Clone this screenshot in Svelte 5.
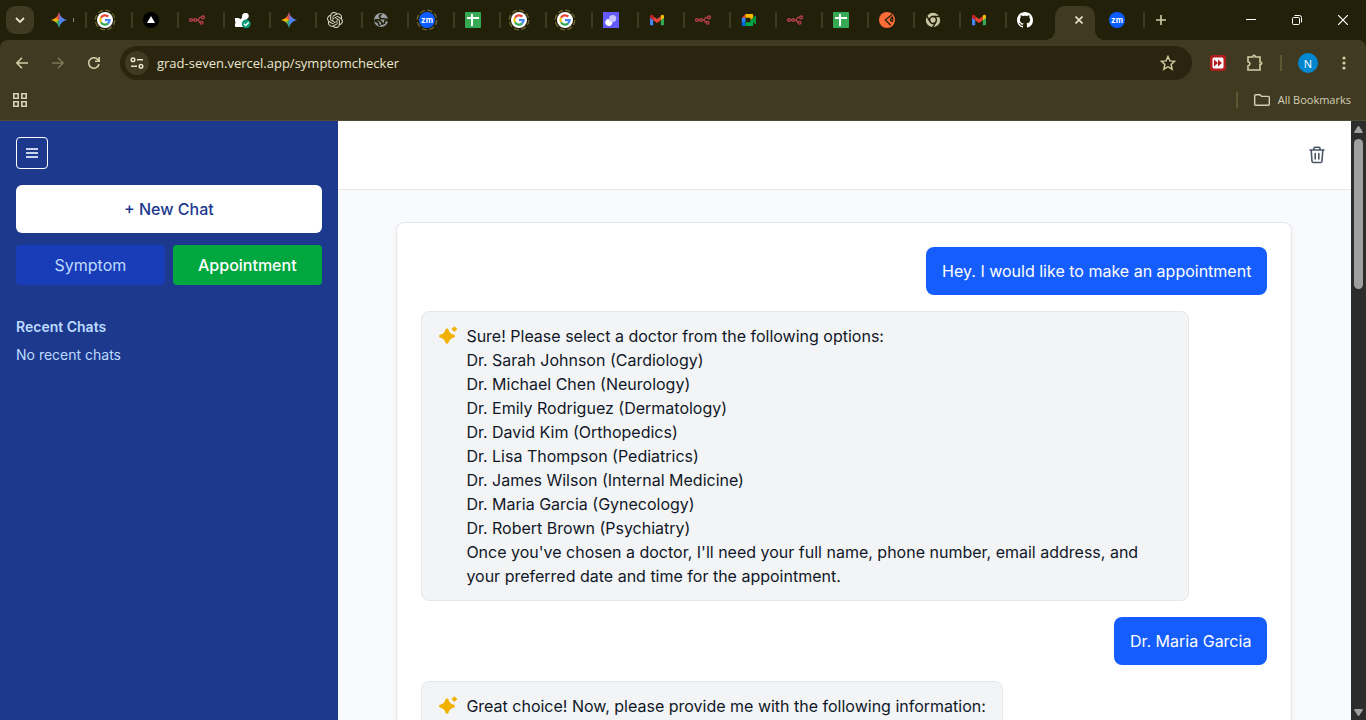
<script>
  const tabs = [
    { icon: 'gemini', label: 'Gemini', sliver: true },
    { icon: 'google', label: 'Google', ring: true },
    { icon: 'vercel', label: 'Vercel' },
    { icon: 'n8n', label: 'n8n' },
    { icon: 'checked', label: 'Webhook' },
    { icon: 'gemini', label: 'Gemini' },
    { icon: 'openai', label: 'ChatGPT' },
    { icon: 'globe', label: 'Web page' },
    { icon: 'zoom', label: 'Zoom', ring: true },
    { icon: 'sheets', label: 'Sheets' },
    { icon: 'google', label: 'Google', ring: true },
    { icon: 'google', label: 'Google', ring: true },
    { icon: 'shapes', label: 'Workspace' },
    { icon: 'gmail', label: 'Gmail' },
    { icon: 'n8n', label: 'n8n' },
    { icon: 'meet', label: 'Meet' },
    { icon: 'n8n', label: 'n8n' },
    { icon: 'sheets', label: 'Sheets' },
    { icon: 'orange', label: 'Docs' },
    { icon: 'chrome', label: 'Chrome' },
    { icon: 'gmail', label: 'Gmail' },
    { icon: 'github', label: 'GitHub', last: true },
    { icon: 'active', label: 'Symptom checker' },
    { icon: 'zoom', label: 'Zoom' }
  ];

  const messages = [
    { from: 'user', lines: ['Hey. I would like to make an appointment'] },
    {
      from: 'assistant',
      lines: [
        'Sure! Please select a doctor from the following options:',
        'Dr. Sarah Johnson (Cardiology)',
        'Dr. Michael Chen (Neurology)',
        'Dr. Emily Rodriguez (Dermatology)',
        'Dr. David Kim (Orthopedics)',
        'Dr. Lisa Thompson (Pediatrics)',
        'Dr. James Wilson (Internal Medicine)',
        'Dr. Maria Garcia (Gynecology)',
        'Dr. Robert Brown (Psychiatry)',
        "Once you've chosen a doctor, I'll need your full name, phone number, email address, and your preferred date and time for the appointment."
      ]
    },
    { from: 'user', lines: ['Dr. Maria Garcia'] },
    {
      from: 'assistant',
      lines: ['Great choice! Now, please provide me with the following information:']
    }
  ];

  let address = $state('grad-seven.vercel.app/symptomchecker');
</script>

{#snippet favicon(name)}
  {#if name === 'gemini'}
    <span class="gemini"></span>
  {:else if name === 'google'}
    <svg width="16" height="16" viewBox="0 0 16 16">
      <circle cx="8" cy="8" r="8" fill="#fff" />
      <g fill="none" stroke-width="2.2">
        <path d="M11.3 4.6A4.6 4.6 0 0 0 4 5.8" stroke="#ea4335" />
        <path d="M4 5.8a4.6 4.6 0 0 0 0 4.5" stroke="#fbbc05" />
        <path d="M4 10.3a4.6 4.6 0 0 0 7.1 1.1" stroke="#34a853" />
        <path d="M11.1 11.4A4.5 4.5 0 0 0 12.6 8.2H8" stroke="#4285f4" />
      </g>
    </svg>
  {:else if name === 'vercel'}
    <svg width="16" height="16" viewBox="0 0 16 16">
      <circle cx="8" cy="8" r="8" fill="#000" />
      <path d="M8 4l4 7H4z" fill="#fff" />
    </svg>
  {:else if name === 'n8n'}
    <svg width="16" height="16" viewBox="0 0 16 16" fill="none" stroke="#b8404f" stroke-width="1.3">
      <circle cx="2" cy="8" r="1.4" />
      <circle cx="6.2" cy="8" r="1.4" />
      <circle cx="14" cy="5.4" r="1.4" />
      <circle cx="12.6" cy="10.7" r="1.4" />
      <path d="M3.4 8h1.4M7.6 8h1.2q1 0 1.1-1.3t1.4-1.3h1.3M8.8 8q1 0 1.1 1.3t1.3 1.4" />
    </svg>
  {:else if name === 'checked'}
    <svg width="16" height="16" viewBox="0 0 16 16">
      <path d="M0 6h4q1.500 2.500 3-.5Q6.500 1 10.500.9q4.200.2 3 4.700-1.500 1.900-4 3.400-1.900 2.500-1 6H1q-1 0-1-1v-2q1.200-1.500 0-3z" fill="#fff" />
      <circle cx="11.200" cy="11.800" r="4.400" fill="#0a9c78" />
      <path d="M9 11.800l1.700 1.700 3-3.300" fill="none" stroke="#fff" stroke-width="1.400" />
    </svg>
  {:else if name === 'openai'}
    <svg width="16" height="16" viewBox="0 0 24 24" fill="#d8d4bd">
      <path d="M22.282 9.821a5.985 5.985 0 0 0-.516-4.910 6.046 6.046 0 0 0-6.510-2.900A6.065 6.065 0 0 0 4.981 4.182a5.985 5.985 0 0 0-3.998 2.900 6.046 6.046 0 0 0 .743 7.097 5.980 5.980 0 0 0 .510 4.911 6.051 6.051 0 0 0 6.515 2.900A5.985 5.985 0 0 0 13.260 24a6.056 6.056 0 0 0 5.772-4.206 5.990 5.990 0 0 0 3.998-2.900 6.056 6.056 0 0 0-.748-7.073zM13.260 22.430a4.476 4.476 0 0 1-2.876-1.041l.142-.080 4.778-2.758a.795.795 0 0 0 .393-.681v-6.737l2.020 1.169a.071.071 0 0 1 .038.052v5.583a4.504 4.504 0 0 1-4.495 4.493zM3.600 18.304a4.471 4.471 0 0 1-.535-3.014l.142.085 4.783 2.758a.771.771 0 0 0 .780 0l5.843-3.368v2.332a.080.080 0 0 1-.033.062L9.740 19.950a4.499 4.499 0 0 1-6.140-1.646zM2.341 7.896a4.485 4.485 0 0 1 2.365-1.973V11.600a.766.766 0 0 0 .388.677l5.814 3.354-2.020 1.169a.076.076 0 0 1-.071 0l-4.830-2.787A4.504 4.504 0 0 1 2.341 7.872zM18.937 11.752l-5.833-3.388L15.119 7.200a.076.076 0 0 1 .071 0l4.830 2.791a4.494 4.494 0 0 1-.677 8.105v-5.678a.790.790 0 0 0-.406-.666zM20.948 8.729l-.142-.085-4.774-2.782a.776.776 0 0 0-.785 0L9.409 9.230V6.897a.066.066 0 0 1 .028-.061l4.830-2.787a4.499 4.499 0 0 1 6.681 4.680zM8.307 12.863l-2.020-1.164a.080.080 0 0 1-.038-.057V6.074a4.499 4.499 0 0 1 7.376-3.453l-.142.080L8.704 5.460a.795.795 0 0 0-.393.681zM9.404 10.498L12.006 8.998l2.607 1.500v2.999l-2.597 1.500-2.607-1.500z" />
    </svg>
  {:else if name === 'globe'}
    <svg width="16" height="16" viewBox="0 0 16 16">
      <circle cx="8" cy="8" r="7" fill="#9aa0a6" />
      <path d="M8.800 2.200Q6 3.200 6.500 4.900T10 6.700t4 .5l.3 1.400-2.300.2-.7 2.600-2.500.8.200-1.800-1.700-1.200-.6-1.300L2.500 7.800 2 9l3.200 1.400.8 2.400 1.300 1" fill="none" stroke="#23200a" stroke-width="1.600" />
    </svg>
  {:else if name === 'zoom'}
    <svg width="16" height="16" viewBox="0 0 16 16">
      <circle cx="8" cy="8" r="8" fill="#0b5cff" />
      <text x="8" y="11" text-anchor="middle" font-family="Inter, sans-serif" font-size="8" font-weight="700" fill="#fff">zm</text>
    </svg>
  {:else if name === 'sheets'}
    <svg width="16" height="16" viewBox="0 0 16 16">
      <rect width="16" height="16" rx="1" fill="#34a853" />
      <path d="M2 6h12M7 2v12" stroke="#fff" stroke-width="2" />
    </svg>
  {:else if name === 'shapes'}
    <svg width="16" height="16" viewBox="0 0 16 16">
      <rect width="16" height="16" fill="#635bff" />
      <path d="M3 8.200l2-1.400 4.600 3.600-.8 2a3.400 3.400 0 0 1-5.800-4.200z" fill="#fff" />
      <circle cx="9.700" cy="6.500" r="3.600" fill="#c7c4ff" />
    </svg>
  {:else if name === 'gmail'}
    <svg width="16" height="16" viewBox="0 0 16 16">
      <path d="M1 5v7.500q0 .8.800.8h2.400V7z" fill="#4285f4" />
      <path d="M15 5v7.500q0 .8-.8.800h-2.400V7z" fill="#34a853" />
      <path d="M4.200 4.200L8 7l3.800-2.800v4L8 11 4.200 8.200z" fill="#ea4335" />
      <path d="M11.800 3.600q1.400-1.200 2.500-.6.700.4.700 1.500v1.300l-3.200 2.400z" fill="#fbbc04" />
      <path d="M4.200 3.600Q2.800 2.400 1.700 3 1 3.400 1 4.500v1.300l3.200 2.400z" fill="#c5221f" />
    </svg>
  {:else if name === 'meet'}
    <svg width="16" height="16" viewBox="0 0 16 16">
      <path d="M4.500 2v4H.8z" fill="#ea4335" />
      <path d="M.8 6h3.700v4H.8z" fill="#2684fc" />
      <path d="M.8 10h3.700v4H1.800q-1 0-1-1z" fill="#0066da" />
      <path d="M4.500 2h6.700q1 0 1 1v3.300L9.500 8.500V5.800h-5z" fill="#ffba00" />
      <path d="M4.500 10.300h5V8l2.700 1.500V13q0 1-1 1H4.500z" fill="#00ac47" />
      <path d="M9.500 8l4.700-4.200q.8-.4.800.4v7.600q0 .8-.8.300z" fill="#00983a" />
    </svg>
  {:else if name === 'orange'}
    <svg width="16" height="16" viewBox="0 0 16 16">
      <circle cx="8" cy="8" r="8" fill="#ff6c37" />
      <path d="M13 2.500L6.400 8l5.300 5.300M13.300 5q-2.300 1.800-1.500 3.800l1.500.6q1.200-2.200 0-4.400z" fill="none" stroke="#23200a" stroke-width="1.300" />
    </svg>
  {:else if name === 'chrome'}
    <svg width="16" height="16" viewBox="0 0 16 16">
      <circle cx="8" cy="8" r="7.200" fill="#c9c4a1" />
      <g fill="none" stroke="#23200a" stroke-width="1.500">
        <circle cx="8" cy="8" r="3.400" />
        <path d="M8 4.600h7M11 9.700L7.500 15.700M5 9.700L1.500 3.700" />
      </g>
    </svg>
  {:else if name === 'github'}
    <svg width="16" height="16" viewBox="0 0 16 16" fill="#fff">
      <path d="M8 0C3.580 0 0 3.580 0 8c0 3.540 2.290 6.530 5.470 7.590.4.070.55-.17.55-.38 0-.19-.01-.82-.01-1.490-2.010.37-2.530-.49-2.690-.94-.09-.23-.48-.94-.82-1.130-.28-.15-.68-.52-.01-.53.63-.01 1.080.58 1.230.82.720 1.210 1.870.87 2.330.66.070-.52.280-.87.510-1.070-1.780-.2-3.640-.89-3.640-3.950 0-.87.310-1.590.82-2.150-.08-.2-.36-1.020.08-2.120 0 0 .67-.21 2.200.82.640-.18 1.320-.27 2-.27s1.360.09 2 .27c1.530-1.040 2.200-.82 2.200-.82.440 1.100.160 1.920.080 2.120.510.56.820 1.270.820 2.150 0 3.070-1.870 3.750-3.650 3.950.290.250.540.730.540 1.480 0 1.070-.01 1.930-.01 2.200 0 .21.150.46.550.38A8.010 8.010 0 0 0 16 8c0-4.420-3.580-8-8-8z" />
    </svg>
  {/if}
{/snippet}

{#snippet sparkle()}
  <svg class="sparkle" width="20" height="20" viewBox="0 0 20 20" fill="#f0b100" aria-hidden="true">
    <path d="M9 2.600q1.200 0 1.600 1.200.9 3.800 4.700 4.800 1.700.4 1.700 1.600t-1.700 1.600q-3.800 1-4.700 4.800-.4 1.200-1.600 1.200t-1.600-1.200q-.9-3.800-4.700-4.800Q1 11.400 1 10.200t1.700-1.600q3.800-1 4.700-4.800Q7.800 2.600 9 2.600z" />
    <path d="M16.400.4q.7 0 .9.700.3.900 1.200 1.200.7.200.7.800t-.7.800q-.9.300-1.200 1.200-.2.700-.9.700t-.9-.7q-.3-.9-1.200-1.200-.7-.2-.7-.8t.7-.8q.9-.3 1.200-1.200.2-.7.900-.7z" />
  </svg>
{/snippet}

<div class="window">
  <header class="browser">
    <div class="strip">
      <button class="tab-search" aria-label="Search tabs">
        <svg width="10" height="6" viewBox="0 0 10 6" fill="none" stroke="#e6e2c8" stroke-width="1.800"><path d="M1 1l4 4 4-4" /></svg>
      </button>
      <nav class="tabs" aria-label="Tabs">
        {#each tabs as tab}
          {#if tab.icon === 'active'}
            <div class="tab active">
              <button class="close-tab" aria-label="Close tab">
                <svg width="8" height="8" viewBox="0 0 8 8" stroke="#e6e2c8" stroke-width="1.600"><path d="M.5.5l7 7M7.500.5l-7 7" /></svg>
              </button>
            </div>
          {:else}
            <button class="tab" class:plain={tab.last} aria-label={tab.label}>
              <span class="favicon">
                {@render favicon(tab.icon)}
                {#if tab.ring}
                  <svg class="ring" width="22" height="22" viewBox="0 0 22 22" fill="none" stroke="#736833" stroke-width="1.200"><circle cx="11" cy="11" r="9.800" stroke-dasharray="5.200 2.500" /></svg>
                {/if}
              </span>
              {#if tab.sliver}<span class="sliver"></span>{/if}
            </button>
          {/if}
        {/each}
      </nav>
      <button class="new-tab" aria-label="New tab">
        <svg width="10" height="10" viewBox="0 0 10 10" stroke="#d3cda6" stroke-width="1.600"><path d="M5 0v10M0 5h10" /></svg>
      </button>
      <div class="window-controls">
        <button aria-label="Minimize"><svg width="10" height="10" viewBox="0 0 10 10" stroke="#fff"><path d="M0 4.500h10" /></svg></button>
        <button aria-label="Restore"><svg width="10" height="10" viewBox="0 0 10 10" fill="none" stroke="#fff"><rect x=".5" y="2.500" width="7" height="7" rx="1" /><path d="M2.500.5h5q2 0 2 2v5" /></svg></button>
        <button aria-label="Close"><svg width="10" height="10" viewBox="0 0 10 10" stroke="#fff" stroke-width="1.200"><path d="M0 0l10 10M10 0L0 10" /></svg></button>
      </div>
    </div>

    <div class="toolbar">
      <div class="nav-buttons">
        <button aria-label="Back"><svg width="12" height="12" viewBox="0 0 12 12" fill="none" stroke="#d3cda6" stroke-width="1.600"><path d="M12 6H1.200M6 .8L.9 6 6 11.200" /></svg></button>
        <button aria-label="Forward"><svg width="12" height="12" viewBox="0 0 12 12" fill="none" stroke="#7b7557" stroke-width="1.600"><path d="M0 6h10.800M6 .8L11.100 6 6 11.200" /></svg></button>
        <button aria-label="Reload"><svg width="12" height="12" viewBox="0 0 12 12" fill="none" stroke="#d3cda6" stroke-width="1.600"><path d="M11 7a5.200 5.200 0 1 1-1-4.200L11 4M11.200 0v4.300H7" /></svg></button>
      </div>
      <div class="omnibox">
        <button class="site-info" aria-label="View site information">
          <svg width="14" height="12" viewBox="0 0 14 12" fill="none" stroke="#e6e2c8" stroke-width="1.500"><circle cx="3" cy="2.800" r="1.800" /><path d="M7 2.800h6M1 9.200h6" /><circle cx="11" cy="9.200" r="1.800" /></svg>
        </button>
        <input aria-label="Address" type="text" spellcheck="false" bind:value={address} />
        <button class="star" aria-label="Bookmark this tab">
          <svg width="16" height="16" viewBox="0 0 16 16" fill="none" stroke="#d3cda6" stroke-width="1.400"><path d="M8 1.500l1.900 4.400 4.800.4-3.600 3.200 1.100 4.700L8 11.700l-4.200 2.500 1.100-4.700L1.300 6.300l4.800-.4z" /></svg>
        </button>
      </div>
      <div class="extensions">
        <button aria-label="Extension">
          <svg width="16" height="16" viewBox="0 0 16 16"><rect width="16" height="16" rx="3" fill="#b01e1e" /><rect x="2.500" y="2.500" width="11" height="11" rx="1.500" fill="#fff" /><path d="M4 4.500L8 8l-4 3.500zM8 4.500L12 8l-4 3.500z" fill="#b01e1e" /></svg>
        </button>
        <button aria-label="Extensions">
          <svg width="18" height="18" viewBox="0 0 18 18" fill="none" stroke="#d3cda6" stroke-width="1.600"><path d="M3 3h4.800v-.6Q8 1.300 9 1.300t1.200 1.100V3H15v5h.6q1.100.2 1.100 1.200t-1.100 1.200H15V16H3v-4.200q2-.4 2-2t-2-2z" /></svg>
        </button>
        <span class="divider"></span>
        <button class="avatar" aria-label="Profile">N</button>
        <button aria-label="Browser menu"><svg width="4" height="14" viewBox="0 0 4 14" fill="#d3cda6"><circle cx="2" cy="2" r="1.600" /><circle cx="2" cy="7" r="1.600" /><circle cx="2" cy="12" r="1.600" /></svg></button>
      </div>
    </div>

    <div class="bookmarks">
      <button aria-label="Tab groups">
        <svg width="14" height="14" viewBox="0 0 14 14" fill="none" stroke="#d5d0b8" stroke-width="1.600"><path d="M.8.8h4.400v4.400H.8zM8.800.8h4.400v4.400H8.800zM.8 8.800h4.400v4.400H.8zM8.800 8.800h4.400v4.400H8.800z" /></svg>
      </button>
      <div class="bookmarks-end">
        <span class="divider"></span>
        <button class="all-bookmarks">
          <svg width="16" height="12" viewBox="0 0 16 12" fill="none" stroke="#d5d0b8" stroke-width="1.400"><path d="M.7 1.700q0-1 1-1H6l1.600 1.700h6.700q1 0 1 1v6.900q0 1-1 1H1.700q-1 0-1-1z" /></svg>
          <span>All Bookmarks</span>
        </button>
      </div>
    </div>
  </header>

  <div class="viewport">
    <div class="app">
      <aside class="sidebar">
        <button class="menu" aria-label="Toggle sidebar">
          <svg width="12" height="10" viewBox="0 0 12 10" stroke="#c8d3ee" stroke-width="2"><path d="M0 1h12M0 5h12M0 9h12" /></svg>
        </button>
        <button class="new-chat">+ New Chat</button>
        <div class="modes">
          <button class="symptom">Symptom</button>
          <button class="appointment">Appointment</button>
        </div>
        <section class="recent">
          <h2>Recent Chats</h2>
          <p>No recent chats</p>
        </section>
      </aside>
      <main>
        <div class="topbar">
          <button class="trash" aria-label="Clear chat">
            <svg width="20" height="20" viewBox="0 0 20 20" fill="none" stroke="#4a5565" stroke-width="1.600" stroke-linecap="round" stroke-linejoin="round"><path d="M3 5h14M7 5V3.600q0-1.300 1.300-1.300h3.400q1.300 0 1.300 1.300V5M4.200 5l.8 11.200q.1 1.300 1.400 1.300h7.200q1.300 0 1.400-1.300L15.800 5M8.200 8.500V14M11.800 8.500V14" /></svg>
          </button>
        </div>
        <div class="chat-area">
          <div class="card">
            {#each messages as message}
              <div class="bubble {message.from}">
                {#if message.from === 'assistant'}{@render sparkle()}{/if}
                <div class="text">
                  {#each message.lines as line}<p>{line}</p>{/each}
                </div>
              </div>
            {/each}
          </div>
        </div>
      </main>
    </div>
    <div class="scrollbar" aria-hidden="true">
      <svg width="9" height="7" viewBox="0 0 9 7" fill="#9f9f9f"><path d="M3.500.7q1-1.200 2 0l3.200 5q.3 1.300-.8 1.300H1.100Q0 7 .3 5.700z" /></svg>
      <div class="track"><div class="thumb"></div></div>
      <svg width="9" height="7" viewBox="0 0 9 7" fill="#9f9f9f"><path d="M3.500 6.300q1 1.200 2 0l3.200-5Q9 0 7.900 0H1.100Q0 0 .3 1.300z" /></svg>
    </div>
  </div>
</div>

<style>
  :global(body) {
    margin: 0;
    overflow: hidden;
  }

  * {
    box-sizing: border-box;
  }

  button {
    display: flex;
    align-items: center;
    justify-content: center;
    padding: 0;
    border: 0;
    background: none;
    color: inherit;
    font: inherit;
    cursor: pointer;
  }

  svg {
    display: block;
    flex: none;
  }

  h2,
  p {
    margin: 0;
  }

  .window {
    display: flex;
    flex-direction: column;
    height: 100vh;
    font-family: Inter, sans-serif;
  }

  .browser {
    flex: none;
    background: #23200a;
    border-bottom: 1px solid #504a33;
    font-family: 'Open Sans', sans-serif;
  }

  .strip {
    display: flex;
    align-items: center;
    height: 40px;
    padding-left: 6px;
  }

  .tab-search {
    width: 28px;
    height: 28px;
    margin-right: 7px;
    border-radius: 9px;
    background: #403a22;
  }

  .tabs {
    display: flex;
    align-self: stretch;
  }

  .tab {
    position: relative;
    justify-content: flex-start;
    width: 46px;
    padding-left: 10px;
  }

  .tab::after {
    content: '';
    position: absolute;
    top: 12px;
    right: 0;
    width: 2px;
    height: 16px;
    background: #403a22;
  }

  .tab.plain::after {
    display: none;
  }

  .favicon {
    position: relative;
    width: 16px;
    height: 16px;
  }

  .ring {
    position: absolute;
    top: -3px;
    left: -3px;
  }

  .sliver {
    width: 1px;
    height: 4px;
    margin-left: 6px;
    background: #8a8570;
  }

  .gemini {
    display: block;
    width: 16px;
    height: 16px;
    clip-path: path('M8 0Q9.500 6.500 16 8Q9.500 9.500 8 16Q6.500 9.500 0 8Q6.500 6.500 8 0Z');
    background: conic-gradient(from -20deg, #ea4335, #6a7de0 50deg, #4285f4 170deg, #34a853 225deg, #fbbc05 285deg, #ea4335);
  }

  .tab.active {
    display: flex;
    align-items: center;
    justify-content: center;
    width: 40px;
    margin: 6px 4px 0 2px;
    padding: 0 0 6px 8px;
    border-radius: 10px 10px 0 0;
    background: #403a22;
  }

  .tab.active::before,
  .tab.active::after {
    content: '';
    position: absolute;
    top: auto;
    bottom: 0;
    width: 10px;
    height: 10px;
  }

  .tab.active::before {
    left: -10px;
    background: radial-gradient(circle at 0 0, transparent 10px, #403a22 10px);
  }

  .tab.active::after {
    right: -10px;
    background: radial-gradient(circle at 100% 0, transparent 10px, #403a22 10px);
  }

  .close-tab {
    width: 16px;
    height: 16px;
  }

  .new-tab {
    width: 28px;
    height: 28px;
    margin-left: 2px;
  }

  .window-controls {
    display: flex;
    align-self: stretch;
    margin-left: auto;
  }

  .window-controls button {
    width: 46px;
  }

  .toolbar {
    display: flex;
    align-items: center;
    height: 46px;
    padding: 0 8px;
    border-radius: 8px 8px 0 0;
    background: #403a22;
  }

  .nav-buttons {
    display: flex;
    gap: 8px;
    margin-right: 12px;
  }

  .nav-buttons button {
    width: 28px;
    height: 28px;
  }

  .omnibox {
    display: flex;
    flex: 1;
    align-items: center;
    height: 34px;
    padding: 0 16px 0 5px;
    border-radius: 17px;
    background: #2b250f;
  }

  .site-info {
    width: 24px;
    height: 24px;
    border-radius: 12px;
    background: #403a22;
  }

  .omnibox input {
    flex: 1;
    min-width: 0;
    height: 24px;
    margin-left: 8px;
    padding: 0;
    border: 0;
    outline: 0;
    background: none;
    color: #eae6d0;
    font: 13px/24px 'Open Sans', sans-serif;
  }

  .extensions {
    display: flex;
    align-items: center;
    margin-left: 12px;
  }

  .extensions button {
    width: 28px;
    height: 28px;
    margin-right: 8px;
  }

  .divider {
    width: 2px;
    height: 16px;
    background: #5e5731;
  }

  .extensions .divider {
    margin: 0 16px 0 4px;
  }

  .extensions .avatar {
    width: 20px;
    height: 20px;
    margin-right: 12px;
    border-radius: 10px;
    background: #0288d1;
    color: #fff;
    font-size: 11px;
  }

  .extensions button:last-child {
    margin-right: 0;
  }

  .bookmarks {
    display: flex;
    align-items: center;
    justify-content: space-between;
    height: 34px;
    padding: 0 15px 6px 13px;
    background: #403a22;
  }

  .bookmarks-end,
  .all-bookmarks {
    display: flex;
    align-items: center;
  }

  .all-bookmarks {
    gap: 8px;
    margin-left: 16px;
    color: #d5d0b8;
    font-size: 11px;
    line-height: 16px;
  }

  .viewport {
    display: flex;
    flex: 1;
    min-height: 0;
  }

  .app {
    display: flex;
    flex: 1;
    min-width: 0;
    overflow: hidden;
    background: #f9fafb;
  }

  .sidebar {
    display: flex;
    flex: none;
    flex-direction: column;
    width: 25%;
    padding: 16px;
    background: #1c398e;
    color: #bedbff;
  }

  .menu {
    width: 32px;
    height: 32px;
    border: 1px solid #fff;
    border-radius: 4px;
  }

  .new-chat {
    margin-top: 16px;
    padding: 12px;
    border-radius: 6px;
    background: #fff;
    color: #1c398e;
    font-size: 16px;
    font-weight: 500;
    line-height: 24px;
  }

  .modes {
    display: grid;
    grid-template-columns: 1fr 1fr;
    gap: 8px;
    margin-top: 12px;
  }

  .modes button {
    padding: 8px;
    border-radius: 4px;
    font-size: 16px;
    line-height: 24px;
  }

  .symptom {
    background: #193cb8;
  }

  .modes .appointment {
    background: #00a63e;
    color: #fff;
    font-weight: 500;
  }

  .recent {
    margin-top: 32px;
    font-size: 14px;
    line-height: 20px;
  }

  .recent h2 {
    margin-bottom: 8px;
    font-size: 14px;
    font-weight: 600;
  }

  main {
    display: flex;
    flex: 1;
    flex-direction: column;
    min-width: 0;
  }

  .topbar {
    display: flex;
    flex: none;
    justify-content: flex-end;
    padding: 16px;
    border-bottom: 1px solid #e5e7eb;
    background: #fff;
  }

  .trash {
    width: 36px;
    height: 36px;
  }

  .chat-area {
    flex: 1;
    min-height: 0;
    padding: 32px;
  }

  .card {
    display: flex;
    flex-direction: column;
    gap: 16px;
    max-width: 896px;
    margin: 0 auto;
    padding: 24px;
    border: 1px solid #e5e7eb;
    border-radius: 8px;
    background: #fff;
    box-shadow: 0 1px 2px rgb(0 0 0 / 8%);
  }

  .bubble {
    display: flex;
    max-width: 768px;
    padding: 12px 16px;
    border-radius: 8px;
    font-size: 16px;
    line-height: 24px;
  }

  .user {
    align-self: flex-end;
    background: #155dfc;
    color: #fff;
  }

  .assistant {
    gap: 8px;
    align-self: flex-start;
    border: 1px solid #e5e7eb;
    background: #f3f4f6;
    color: #101828;
  }

  .sparkle {
    margin-top: 2px;
  }

  .scrollbar {
    display: flex;
    flex: none;
    flex-direction: column;
    align-items: center;
    width: 15px;
    padding: 5px 0 4px;
    background: #2c2c2c;
  }

  .track {
    flex: 1;
    padding: 6px 0;
  }

  .thumb {
    width: 9px;
    height: 150px;
    border-radius: 5px;
    background: #9f9f9f;
  }
</style>
